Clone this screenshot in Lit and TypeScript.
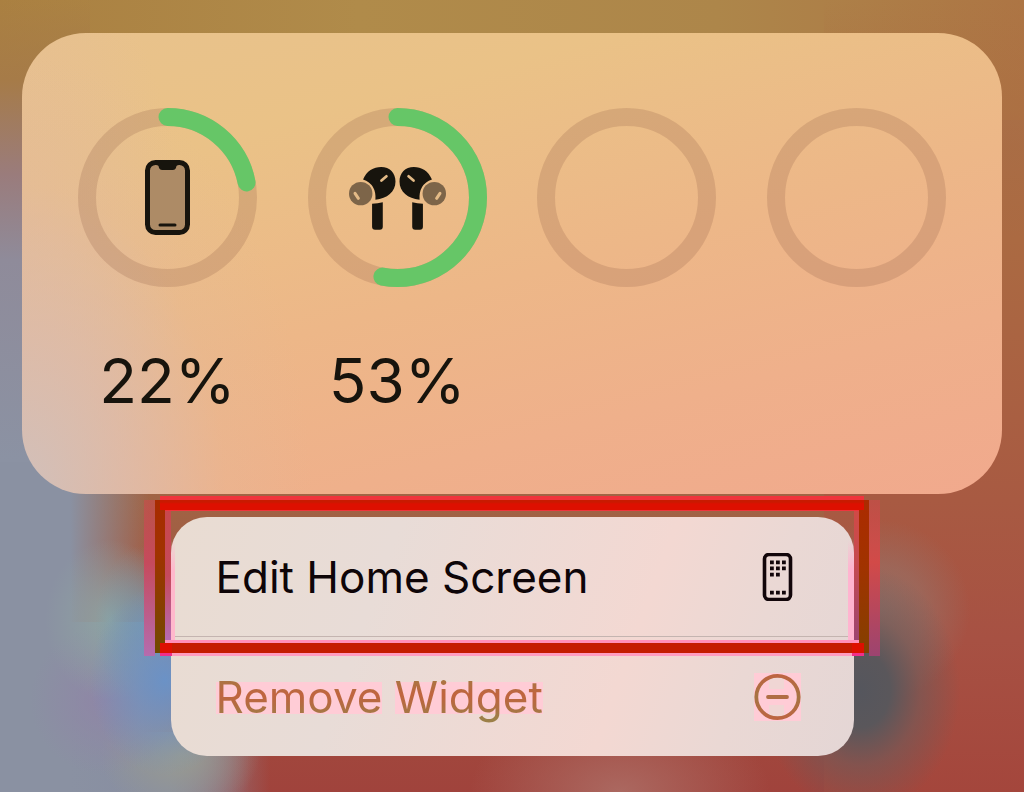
import { LitElement, html, css, svg, nothing } from "lit";
import { customElement, property } from "lit/decorators.js";

type Device = { kind: "phone" | "buds"; label: string; level: number };

const phoneIcon = html`<svg class="phone" viewBox="0 0 45 75" aria-hidden="true">
  <rect x="2.5" y="2.5" width="40" height="70" rx="8" fill="#ad8b66" stroke="#17140d" stroke-width="5" />
  <path d="M11 3h23v2q-3 0-3 3-1 2-3 2H17q-2 0-3-2 0-3-3-3z" fill="#17140d" />
  <path d="M15 65h15" stroke="#17140d" stroke-width="3" stroke-linecap="round" />
</svg>`;

const bud = svg`
  <path d="M84 90C94 64 116 52 138 52C164 52 181 70 181 96C181 126 156 148 121 150Q124 104 84 90Z" fill="#17140d" />
  <path d="M139 93L154 80" stroke="#e4bb87" stroke-width="8" stroke-linecap="round" />
  <circle cx="77" cy="132" r="35" fill="#7d6549" />
  <path d="M60 131L70 146" stroke="#e4bb87" stroke-width="9" stroke-linecap="round" />
  <path d="M111 162Q128 162 143 158V231Q143 240 134 240H120Q111 240 111 231Z" fill="#17140d" />`;

const budsIcon = html`<svg class="buds" viewBox="42 50 290 190" aria-hidden="true">
  <g>${bud}</g>
  <g transform="translate(374 0) scale(-1 1)">${bud}</g>
</svg>`;

@customElement("battery-ring")
export class BatteryRing extends LitElement {
  @property({ attribute: false }) device?: Device;

  static styles = css`
    :host { display: flex; flex-direction: column; align-items: center; width: 179px; }
    .dial { display: grid; place-items: center; }
    .dial > * { grid-area: 1 / 1; }
    .ring { width: 179px; height: 179px; display: block; }
    .phone { width: 45px; height: 75px; }
    .buds { width: 97px; height: 64px; }
    .level { margin-top: 54px; font-size: 62px; line-height: 80px; color: #17140d; white-space: nowrap; }
  `;

  render() {
    const d = this.device;
    return html`
      <div class="dial">
        <svg class="ring" viewBox="0 0 179 179" aria-hidden="true">
          <circle cx="89.5" cy="89.5" r="80.5" fill="none" stroke="#8c5a46" stroke-opacity=".22" stroke-width="18" />
          ${d
            ? svg`<circle cx="89.5" cy="89.5" r="80.5" fill="none" stroke="#66c667" stroke-width="18"
                stroke-linecap="round" pathLength="100" stroke-dasharray="${d.level} 100" transform="rotate(-90 89.5 89.5)" />`
            : nothing}
        </svg>
        ${d ? (d.kind === "phone" ? phoneIcon : budsIcon) : nothing}
      </div>
      ${d ? html`<span class="level" aria-label="${d.label} ${d.level}%">${d.level}%</span>` : nothing}
    `;
  }
}

@customElement("app-root")
export class AppRoot extends LitElement {
  private slots: (Device | undefined)[] = [
    { kind: "phone", label: "iPhone", level: 22 },
    { kind: "buds", label: "AirPods Pro", level: 53 },
    undefined,
    undefined,
  ];

  static styles = css`
    :host {
      display: block;
      box-sizing: border-box;
      min-height: 100vh;
      padding: 33px 22px 36px;
      font-family: Inter, "Liberation Sans", sans-serif;
      background:
        radial-gradient(100px 125px at 860px 690px, #55565d 0%, #5a575b 30%, #6d5a5999 60%, #7c5b5400 100%),
        radial-gradient(90px 90px at 880px 610px, #93766dcc 0%, #93766d80 50%, #93766d00 100%),
        radial-gradient(75px 95px at 165px 680px, #6b92c6 0%, #7292c0bb 40%, #6c90c600 100%),
        radial-gradient(50px 80px at 145px 625px, #7299b0cc 0%, #7299b000 100%),
        radial-gradient(65px 80px at 110px 620px, #8fa3a2 0%, #8fa3a200 100%),
        radial-gradient(75px 75px at 105px 700px, #8f86a6 0%, #8f86a600 100%),
        radial-gradient(80px 60px at 180px 755px, #999b90 0%, #999b9000 100%),
        radial-gradient(150px 90px at 620px 792px, #ab6860 0%, #ab686000 100%),
        linear-gradient(90deg, #8a91a2 0, #8a91a2 70px, #8a91a200 150px) 0 100% / 100% 330px no-repeat,
        linear-gradient(90deg, #888ea100 0, #888ea1 80px, #888ea1 170px, #888ea100 270px) 0 100% / 100% 60px no-repeat,
        linear-gradient(90deg, #888ea1 0, #888ea1 140px, #888ea100 250px) 0 100% / 100% 170px no-repeat,
        linear-gradient(180deg, #a9804300 0, #a67b48 80px, #9a7c7c 175px, #8f8b9a 260px, #8b92a3 460px) 0 0 / 90px 470px no-repeat,
        linear-gradient(180deg, #a9704000 0, #ab6a42 240px, #a85a42 500px, #a75143 640px, #a4463c 792px) 100% 0 / 200px 100% no-repeat,
        linear-gradient(90deg, #aa8041 0, #b08b4a 35%, #ad864a 70%, #ad7544 100%) 0 0 / 100% 120px no-repeat,
        linear-gradient(180deg, #a8734a 120px, #a06545 490px, #a4503f 640px, #a0433c 100%);
    }

    .widget {
      display: flex;
      justify-content: space-between;
      align-items: flex-start;
      box-sizing: border-box;
      min-height: 461px;
      padding: 75px 56px 0;
      border-radius: 64px;
      background:
        radial-gradient(290px 440px at 0 100%, #d1c0bb 0%, #d9bcb0bb 35%, #e2b99a44 70%, #e2b99a00 100%),
        radial-gradient(160px 300px at 0 45%, #e2b99f99 0%, #e2b99a00 100%),
        linear-gradient(165deg, #e8c28c 0%, #eac287 22%, #edb788 52%, #efb08b 75%, #f1a98d 100%);
    }

    .menu {
      position: relative;
      display: flex;
      flex-direction: column;
      width: 70%;
      max-width: 683px;
      margin: 23px auto 0;
      border-radius: 36px;
      background: linear-gradient(110deg, #e9dcd2 0%, #e8dcd7 30%, #f3d8d2 66%, #ead8d4 82%, #e4d6d5 100%);
    }

    .item {
      display: flex;
      align-items: center;
      justify-content: space-between;
      height: 120px;
      padding: 0 53px 0 45px;
      border: 0;
      background: none;
      font: inherit;
      font-size: 44px;
      line-height: 56px;
      color: #0e0508;
      text-align: left;
      white-space: nowrap;
      cursor: pointer;
    }
    .item + .item { height: 119px; box-shadow: 0 -1px #c4b4b0; }
    .icon { display: block; width: 47px; height: 48px; flex: none; }

    .word {
      background: linear-gradient(#ffccd6, #ffccd6) 0 55% / 100% 32px no-repeat;
    }
    .ink {
      color: transparent;
      background: linear-gradient(180deg, #a67843 15%, #c1643f 45%, #b36c41 65%, #9c8048 90%);
      background-clip: text;
      -webkit-background-clip: text;
    }

    .highlight {
      position: absolute;
      top: -21px;
      left: -27px;
      right: -26px;
      height: 161px;
      pointer-events: none;
      background:
        linear-gradient(180deg, #c91a00 2px, #dd1000 4px) 50% 4px / calc(100% - 32px) 10px no-repeat,
        linear-gradient(90deg, #dd1000 12px, #c41c00 12px calc(100% - 12px), #dd1000 0) 50% 147px / calc(100% - 32px) 10px no-repeat,
        linear-gradient(180deg, #a82b00 0%, #a03300 35%, #704a00 100%) 11px 4px / 10px 153px no-repeat,
        linear-gradient(180deg, #ac2b00 0%, #a03300 45%, #834000 100%) calc(100% - 11px) 4px / 10px 153px no-repeat,
        linear-gradient(#f0343c, #f0343c) 50% 0 / calc(100% - 32px) 4px no-repeat,
        linear-gradient(#f0343c, #f0343c) 50% 14px / calc(100% - 42px) 1px no-repeat,
        linear-gradient(#ff8fb8, #ff8fb8) 50% 144px / calc(100% - 42px) 3px no-repeat,
        linear-gradient(90deg, #f0308a 12px, #ff9cc0 12px calc(100% - 12px), #f0308a 0) 50% 157px / calc(100% - 32px) 3px no-repeat,
        linear-gradient(180deg, #d0484a88 0%, #c64a5c 40%, #b56cae 100%) 0 4px / 11px 156px no-repeat,
        linear-gradient(180deg, #d0484a88 0%, #d24a48 40%, #9c4470 100%) 100% 4px / 11px 156px no-repeat,
        linear-gradient(180deg, #c8484c 0%, #c64a5c 50%, #b56cb4 100%) 21px 14px / 6px 131px no-repeat,
        linear-gradient(180deg, #d04a46 0%, #c64a50 40%, #9c4470 100%) calc(100% - 21px) 14px / 5px 131px no-repeat,
        linear-gradient(180deg, #ff80a000 30px, #ffb8cc 60px) 27px 14px / 4px 131px no-repeat,
        linear-gradient(180deg, #ff80a000 30px, #ffb4d0 60px) calc(100% - 26px) 14px / 6px 131px no-repeat;
    }
  `;

  render() {
    return html`
      <section class="widget" aria-label="Batteries">
        ${this.slots.map((d) => html`<battery-ring .device=${d}></battery-ring>`)}
      </section>
      <div class="menu" role="menu">
        <button class="item" role="menuitem">
          <span>Edit Home Screen</span>
          <svg class="icon" viewBox="0 0 47 48" aria-hidden="true">
            <rect x="10.500" y="1.500" width="26" height="45" rx="4.500" fill="none" stroke="#12060a" stroke-width="3.600" />
            <path fill="#12060a" d="M16 7.500h3.800v3.800H16zM22 7.500h3.800v3.800H22zM28 7.500h3.800v3.800H28zM16 13.500h3.800v3.800H16zM22 13.500h3.800v3.800H22zM28 13.500h3.800v3.800H28zM16 19.700h3.800v3.800H16zM22 19.700h3.800v3.800H22zM16 37.800h3.800v3.800H16zM22 37.800h3.800v3.800H22zM28 37.800h3.800v3.800H28z" />
          </svg>
        </button>
        <button class="item" role="menuitem">
          <span><span class="word"><span class="ink">Remove</span></span> <span class="word"><span class="ink">Widget</span></span></span>
          <svg class="icon" viewBox="0 0 47 48" aria-hidden="true">
            <defs>
              <linearGradient id="ring" x1="0" y1="0" x2="0" y2="1">
                <stop offset="0" stop-color="#bd6541" />
                <stop offset=".5" stop-color="#a67443" />
                <stop offset="1" stop-color="#bd6541" />
              </linearGradient>
            </defs>
            <path d="M0 0H47V48H0z" fill="#ffccd6" />
            <path d="M15 3H30V16H15zM15 32H30V45H15z" fill="#f0d6d4" />
            <circle cx="23.500" cy="24" r="21.200" fill="none" stroke="url(#ring)" stroke-width="3.800" />
            <path d="M14 24H33" stroke="#b06d44" stroke-width="3.800" stroke-linecap="round" />
          </svg>
        </button>
        <div class="highlight"></div>
      </div>
    `;
  }
}
